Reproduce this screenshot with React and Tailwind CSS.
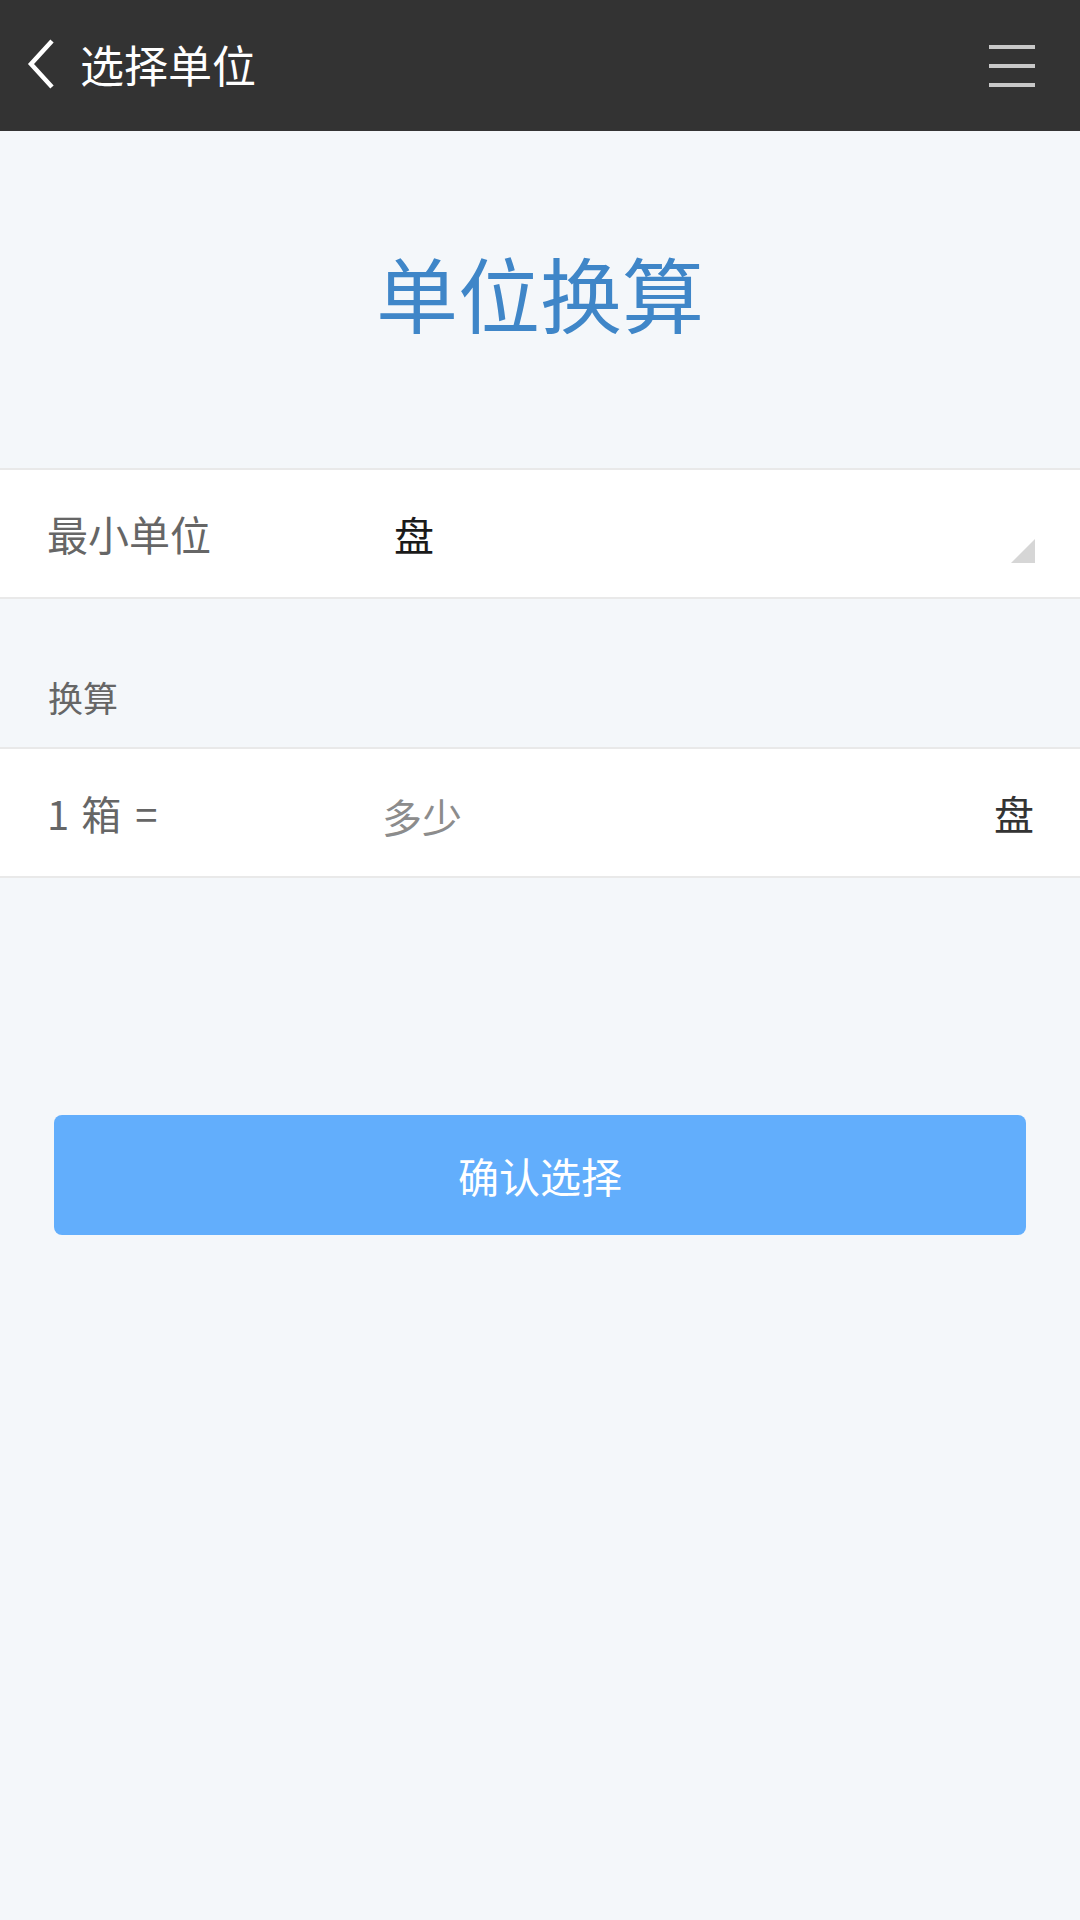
import React from "react";

const font = { fontFamily: '"Noto Sans CJK SC", "Noto Sans", sans-serif' };

const Header = () => (
  <div className="h-[131px] bg-[#333333] flex items-center justify-between pl-[26px] pr-[45px]">
    <div className="flex items-center -mt-[4px]">
      <svg width="30" height="50" viewBox="0 0 30 50" className="block">
        <path d="M26 2 L5 25 L26 48" fill="none" stroke="#ffffff" strokeWidth="4.5" />
      </svg>
      <span className="ml-[24px] text-[44px] leading-none text-white">选择单位</span>
    </div>
    <div className="flex flex-col gap-[15px] w-[46px]">
      <div className="h-[4px] bg-[#c8c8c8]" />
      <div className="h-[4px] bg-[#c8c8c8]" />
      <div className="h-[4px] bg-[#c8c8c8]" />
    </div>
  </div>
);

export default function App() {
  return (
    <div className="min-h-[1920px] w-[1080px] bg-[#f4f7fa]" style={font}>
      <Header />

      {/* 标题 */}
      <div className="h-[337px] flex items-center justify-center pb-[16px]">
        <h1 className="text-[82px] leading-none text-[#3f86c8] font-normal">单位换算</h1>
      </div>

      {/* 最小单位 */}
      <div className="relative h-[131px] bg-white border-y-2 border-[#e9e9e9] flex items-center pl-[47px]">
        <span className="w-[347px] text-[41px] leading-none text-[#666666]">最小单位</span>
        <span className="text-[40px] leading-none text-[#1a1a1a]">盘</span>
        <svg width="24" height="24" viewBox="0 0 24 24" className="absolute right-[45px] bottom-[34px]">
          <polygon points="24,0 24,24 0,24" fill="#d6d6d6" />
        </svg>
      </div>

      {/* 换算 */}
      <div className="h-[148px] flex items-end pl-[48px] pb-[33px]">
        <span className="text-[35px] leading-none text-[#666666]">换算</span>
      </div>

      <div className="h-[131px] bg-white border-y-2 border-[#e9e9e9] flex items-center pl-[47px] pr-[46px]">
        <span className="w-[335px] flex items-center text-[40px] leading-none text-[#666666]">
          <span>1</span>
          <span className="ml-[12px]">箱</span>
          <span className="ml-[14px]">=</span>
        </span>
        <span className="flex-1 text-[40px] leading-none text-[#8c8c8c] pt-[6px]">多少</span>
        <span className="text-[40px] leading-none text-[#333333]">盘</span>
      </div>

      {/* 按钮 */}
      <div className="px-[54px] pt-[237px]">
        <button className="w-full h-[120px] rounded-[8px] bg-[#62aefc] text-white text-[41px] leading-none flex items-center justify-center">
          确认选择
        </button>
      </div>
    </div>
  );
}
